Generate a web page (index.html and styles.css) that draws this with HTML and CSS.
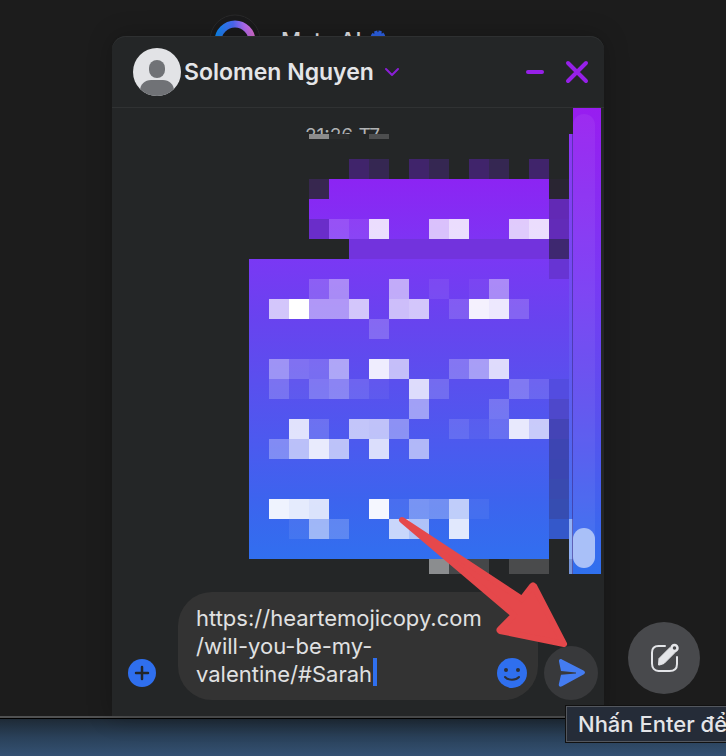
FILE: index.html
```html
<!DOCTYPE html>
<html lang="vi">
<head>
    <meta charset="UTF-8">
    <meta name="viewport" content="width=device-width, initial-scale=1.0">
    <title>Messenger</title>
    <link rel="stylesheet" href="styles.css">
</head>
<body>

    <main class="app">

        <!-- Contact list behind the chat -->
        <a href="#" class="contact">
            <svg class="contact-avatar" viewBox="0 0 52 52" aria-hidden="true">
                <defs>
                    <linearGradient id="ring" gradientUnits="userSpaceOnUse" x1="6" y1="20" x2="46" y2="20">
                        <stop offset="0" stop-color="#0a8cf5"/>
                        <stop offset="0.45" stop-color="#4a68f0"/>
                        <stop offset="0.75" stop-color="#b56af0"/>
                        <stop offset="1" stop-color="#e070d0"/>
                    </linearGradient>
                </defs>
                <circle cx="26" cy="26" r="25" fill="#1a1a1b" stroke="#29292a"/>
                <circle cx="26" cy="27" r="17" fill="none" stroke="url(#ring)" stroke-width="7"/>
            </svg>
            <span class="contact-name">Meta AI</span>
            <svg class="verified" viewBox="0 0 16 16" aria-hidden="true">
                <circle cx="8" cy="8" r="6" fill="#2d62e8"/>
                <circle cx="8" cy="8" r="6" fill="none" stroke="#2d62e8" stroke-width="3" stroke-dasharray="3 1"/>
            </svg>
        </a>

        <!-- Chat window -->
        <section class="chat">
            <header class="chat-header">
                <svg class="avatar" viewBox="0 0 48 48" aria-hidden="true">
                    <defs><clipPath id="face"><circle cx="24" cy="24" r="24"/></clipPath></defs>
                    <circle cx="24" cy="24" r="24" fill="#e2e3e6"/>
                    <g fill="#707276" clip-path="url(#face)">
                        <rect x="16" y="12" width="16" height="18" rx="8"/>
                        <path d="M7 48v-5c0-7 5-11 11-11h12c6 0 11 4 11 11v5z"/>
                    </g>
                </svg>
                <h1>Solomen Nguyen</h1>
                <button class="icon-btn more" aria-label="Menu">
                    <svg width="16" height="10" viewBox="0 0 16 10"><path d="M2 2l6 6 6-6" fill="none" stroke="#8a1fd6" stroke-width="2" stroke-linecap="round" stroke-linejoin="round"/></svg>
                </button>
                <button class="icon-btn" aria-label="Minimize">
                    <svg width="20" height="24" viewBox="0 0 20 24"><path d="M3 12h14" stroke="#9620e8" stroke-width="4" stroke-linecap="round"/></svg>
                </button>
                <button class="icon-btn" aria-label="Close">
                    <svg width="24" height="24" viewBox="0 0 24 24"><path d="M3 3l18 18M21 3L3 21" stroke="#9620e8" stroke-width="4" stroke-linecap="round"/></svg>
                </button>
            </header>

            <div class="messages">
                <div class="log">
                    <time class="time">21:26 T7</time>
                    <svg class="mosaic" viewBox="0 0 324 440" role="img" aria-label="Messages">
                        <defs>
                            <linearGradient id="bubble" gradientUnits="userSpaceOnUse" x1="0" y1="40" x2="0" y2="420">
                                <stop offset="0" stop-color="#8c24f3"/>
                                <stop offset="0.21" stop-color="#7a38f4"/>
                                <stop offset="0.37" stop-color="#6843ef"/>
                                <stop offset="0.53" stop-color="#5a4fee"/>
                                <stop offset="0.7" stop-color="#4b5aef"/>
                                <stop offset="0.85" stop-color="#3c64ee"/>
                                <stop offset="1" stop-color="#316fef"/>
                            </linearGradient>
                            <linearGradient id="edge" x1="0" y1="0" x2="0" y2="1">
                                <stop offset="0" stop-color="#8f35f5"/>
                                <stop offset="0.5" stop-color="#6a52f2"/>
                                <stop offset="1" stop-color="#4470ee"/>
                            </linearGradient>
                        </defs>
                        <rect x="60" width="20" height="5" fill="#8b8b8b"/>
                        <rect x="80" width="20" height="5" fill="#2b2c2c"/>
                        <rect x="120" width="20" height="5" fill="#4d4e4f"/>
                        <g transform="translate(0 5)">
                            <path d="M80 40h220v80h20v280h-20v20H0V120h100v-20H60V60h20z" fill="url(#bubble)"/>
                            <g id="cells"></g>
                        </g>
                        <path d="M320 0h4v385h-4z" fill="url(#edge)"/>
                        <rect x="320" y="385" width="4" height="40" fill="#91b1f6"/>
                        <rect x="320" y="425" width="4" height="15" fill="#7795d8"/>
                        <rect x="323" width="1" height="440" fill="#3d2b8c" opacity="0.6"/>
                    </svg>
                </div>
                <div class="rail">
                    <div class="track"><div class="thumb"></div></div>
                </div>
            </div>

            <form class="composer">
                <button type="button" class="icon-btn plus" aria-label="Add">
                    <svg width="28" height="28" viewBox="0 0 28 28"><circle cx="14" cy="14" r="14" fill="#2f6fee"/><path d="M14 8v12M8 14h12" stroke="#222629" stroke-width="2.500" stroke-linecap="round"/></svg>
                </button>
                <div class="field">
                    <textarea aria-label="Message" rows="3" spellcheck="false">https://heartemojicopy.com
/will-you-be-my-
valentine/#Sarah</textarea>
                    <span class="caret"></span>
                    <button type="button" class="icon-btn emoji" aria-label="Emoji">
                        <svg width="30" height="30" viewBox="0 0 30 30"><circle cx="15" cy="15" r="15" fill="#2f6fee"/><circle cx="9" cy="12" r="2" fill="#2c3038"/><circle cx="21" cy="12" r="2" fill="#2c3038"/><path d="M8 19c3 3.500 11 3.500 14 0" fill="none" stroke="#2c3038" stroke-width="2" stroke-linecap="round"/></svg>
                    </button>
                </div>
                <button type="button" class="send" aria-label="Send">
                    <svg width="30" height="30" viewBox="0 0 30 30"><path d="M3 3.500C2.700 1.500 4 .6 6 1.400L27.500 12.500c2 1 2 3 0 4L6 28.300c-2 1-3.500 0-3.200-2L5 16.800l15-1.300v-1L5 13z" fill="#447cf0"/></svg>
                </button>
            </form>
        </section>

        <button class="new-message" aria-label="New message">
            <svg width="32" height="32" viewBox="0 0 32 32">
                <path d="M17 4h-6.500C6 4 4 6.500 4 10.500v11C4 26 6.500 29 10.500 29h11c4.500 0 7.500-2.500 7.500-7V15" fill="none" stroke="#e4e5e8" stroke-width="2" stroke-linecap="round"/>
                <path d="M11 16.500L22 5.500l5 5-11 11-4.500 1.500h-1z" fill="#e4e5e8" stroke="#e4e5e8" stroke-linejoin="round"/>
                <circle cx="26.500" cy="6" r="3" fill="#48494c" stroke="#e4e5e8" stroke-width="2.500"/>
            </svg>
        </button>

        <svg class="arrow" viewBox="0 0 174 134" aria-hidden="true">
            <path d="M6 5L126 84l10-13q1-1 2 0L168 129 104 116q-1-1 0-2l14-14z" fill="#e5484b" stroke="#e5484b" stroke-width="6" stroke-linejoin="round"/>
        </svg>
    </main>

    <div class="desktop"></div>
    <div class="tooltip" role="tooltip">Nhấn Enter để</div>

    <script>
        // row: [column, fill or white opacity]
        const rows = {
            1: [[5, "#40246b"], [6, "#352752"], [8, "#40246b"], [9, "#352752"], [11, "#40246b"], [12, "#352752"], [14, "#40246b"]],
            2: [[3, "#37274f"], [15, "#292532"]],
            3: [[15, "#6229b5"]],
            4: [[3, "#6a2dc9"], [4, 0.17], [5, 0.09], [6, 0.84], [9, 0.7], [10, 0.84], [13, 0.75], [14, 0.84], [15, "#622bb8"]],
            5: [[5, "#7233dd", 10], [15, "#3e2870"]],
            6: [[15, "#6734d3"]],
            7: [[3, 0.18], [4, 0.4], [7, 0.57], [9, 0.07], [11, 0.05], [12, 0.4]],
            8: [[1, 0.7], [2, 1], [3, 0.46], [4, 0.46], [5, 0.7], [7, 0.66], [8, 0.7], [10, 0.15], [11, 0.93], [12, 0.88], [13, 0.18]],
            9: [[6, 0.2]],
            11: [[1, 0.4], [2, 0.21], [3, 0.18], [4, 0.5], [6, 0.9], [7, 0.64], [10, 0.24], [11, 0.46], [12, 0.8]],
            12: [[1, 0.2], [2, 0.05], [3, 0.23], [4, 0.3], [5, 0.12], [6, 0.05], [8, 0.8], [9, 0.16], [13, 0.24], [14, 0.12], [15, "#534ce0"]],
            13: [[8, 0.45], [12, 0.2], [15, "#4e48cb"]],
            14: [[2, 0.83], [3, 0.16], [5, 0.66], [6, 0.64], [7, 0.35], [10, 0.13], [11, 0.05], [12, 0.15], [13, 0.87], [14, 0.69], [15, "#4444b6"]],
            15: [[1, 0.3], [2, 0.62], [3, 0.88], [4, 0.63], [6, 0.8], [8, 0.57], [15, "#3d45b2"]],
            16: [[15, "#3b46b1"]],
            17: [[15, "#394aaf"]],
            18: [[1, 0.92], [2, 0.87], [3, 0.82], [6, 0.95], [7, 0.07], [8, 0.31], [9, 0.28], [10, 0.68], [11, 0.06], [15, "#364db1"]],
            19: [[2, 0.08], [3, 0.52], [4, 0.2], [7, 0.73], [8, 0.6], [10, 0.85], [15, "#3458ca"]],
            21: [[9, "#8b8d8f"], [10, "#454749", 2], [13, "#4a4b4c", 2]]
        };
        const cells = document.getElementById("cells");

        Object.entries(rows).forEach(([row, items]) => {
            items.forEach(([col, fill, span]) => {
                const rect = document.createElementNS("http://www.w3.org/2000/svg", "rect");
                rect.setAttribute("x", col * 20);
                rect.setAttribute("y", row * 20);
                rect.setAttribute("width", (span || 1) * 20);
                rect.setAttribute("height", 20);
                rect.setAttribute("fill", typeof fill === "string" ? fill : "#fff");
                if (typeof fill === "number") {
                    rect.setAttribute("opacity", fill);
                }
                cells.appendChild(rect);
            });
        });
    </script>

</body>
</html>
```
FILE: styles.css
```css
* {
    margin: 0;
    padding: 0;
    box-sizing: border-box;
}

body {
    display: flex;
    flex-direction: column;
    height: 100vh;
    overflow: hidden;
    background: #1c1c1c;
    color: #e4e5e8;
    font-family: Inter, "Noto Sans", sans-serif;
    font-size: 22px;
}

button {
    border: none;
    background: none;
    cursor: pointer;
}

svg {
    display: block;
    flex: none;
}

.app {
    position: relative;
    flex: 1;
    border-bottom: 2px solid #505152;
}

/* Contact behind the chat */
.contact {
    display: flex;
    align-items: center;
    gap: 20px;
    padding: 14px 0 0 209px;
    color: #e4e5e8;
    font-weight: 500;
    text-decoration: none;
}

.contact-avatar {
    width: 52px;
    height: 52px;
}

.verified {
    width: 16px;
    height: 16px;
    margin: 0 0 4px -12px;
}

/* Chat window */
.chat {
    position: absolute;
    top: 36px;
    right: 122px;
    bottom: 0;
    display: flex;
    flex-direction: column;
    width: 492px;
    background: #242627;
    border-radius: 14px 14px 0 0;
    box-shadow: 0 0 24px rgba(0, 0, 0, 0.25), inset 0 1px #2e3031;
}

.chat-header {
    display: flex;
    align-items: center;
    height: 72px;
    padding: 0 15px 0 21px;
    border-bottom: 1px solid #303233;
}

.avatar {
    width: 48px;
    height: 48px;
}

.chat-header h1 {
    margin-left: 3px;
    font-size: 23px;
    font-weight: 600;
    white-space: nowrap;
}

.icon-btn {
    flex: none;
    margin-left: 20px;
}

.more {
    margin: 0 auto 0 10px;
}

.messages {
    display: flex;
    flex: 1;
    min-height: 0;
    padding-right: 3px;
}

.log {
    display: flex;
    flex: 1;
    flex-direction: column;
    overflow: hidden;
}

.time {
    height: 26px;
    padding-top: 16px;
    overflow: hidden;
    color: #b0b2b4;
    font-size: 19px;
    line-height: 24px;
    text-align: center;
}

.mosaic {
    align-self: flex-end;
    width: 324px;
    height: 440px;
}

.rail {
    width: 28px;
    padding: 6px 6px 6px 0;
    background: linear-gradient(#981df0, #7a38f4 36%, #5a50ee 66%, #2f70ee);
}

.track {
    display: flex;
    align-items: flex-end;
    height: 100%;
    background: rgba(255, 255, 255, 0.06);
    border-radius: 11px;
}

.thumb {
    width: 22px;
    height: 40px;
    background: #a9c0f8;
    border-radius: 11px;
}

/* Message box */
.composer {
    display: flex;
    align-items: flex-end;
    gap: 6px;
    padding: 18px 6px 16px 16px;
}

.plus {
    margin: 0 16px 13px 0;
}

.field {
    position: relative;
    display: flex;
    flex: 1;
    align-items: flex-end;
    padding: 12px 11px 12px 18px;
    background: #333;
    border-radius: 34px;
}

.field textarea {
    flex: 1;
    width: 0;
    height: 84px;
    border: none;
    outline: none;
    resize: none;
    overflow: hidden;
    background: none;
    color: #e0e1e2;
    font: inherit;
    line-height: 28px;
    white-space: pre;
}

.caret {
    position: absolute;
    left: 195px;
    bottom: 14px;
    width: 4px;
    height: 28px;
    background: #2f6fee;
}

.emoji {
    margin: 0;
}

.send {
    display: flex;
    align-items: center;
    justify-content: center;
    flex: none;
    width: 54px;
    height: 54px;
    background: #38393b;
    border-radius: 50%;
}

.new-message {
    position: absolute;
    right: 26px;
    bottom: 22px;
    display: flex;
    align-items: center;
    justify-content: center;
    width: 72px;
    height: 72px;
    background: #48494c;
    border-radius: 50%;
}

/* Pointer to the send button */
.arrow {
    position: absolute;
    right: 156px;
    bottom: 67px;
    width: 174px;
    height: 134px;
}

.desktop {
    height: 38px;
    border-top: 1px solid #000;
    background: linear-gradient(#1e2a36, #2a415a 50%, #345172);
}

.tooltip {
    position: absolute;
    right: 0;
    bottom: 14px;
    width: 160px;
    height: 36px;
    padding-left: 11px;
    overflow: hidden;
    background: #252c38;
    border: 1px solid #53575e;
    border-right: none;
    box-shadow: 0 0 0 1px #111;
    font-weight: 500;
    line-height: 34px;
    white-space: nowrap;
}
```
